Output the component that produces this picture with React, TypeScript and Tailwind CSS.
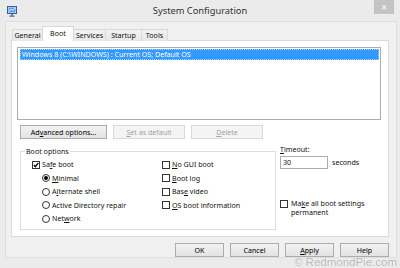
import React from "react";

function AppIcon() {
  return (
    <svg width="10" height="11" viewBox="0 0 10 11">
      <rect x="0.5" y="0.5" width="9" height="7" fill="#dfe8f5" stroke="#3a5ca8" />
      <rect x="1.5" y="1.5" width="7" height="5" fill="#5fa0e4" />
      <path d="M2 5.5 L4 3 L6 4.5 L8 2" stroke="#e8f4ff" strokeWidth="0.8" fill="none" />
      <rect x="4" y="8" width="2" height="1.5" fill="#6b7a90" />
      <rect x="2.5" y="9.5" width="5" height="1.2" fill="#3a5ca8" />
    </svg>
  );
}

function Check({ checked }: { checked?: boolean }) {
  return (
    <span className="flex h-[8px] w-[8px] shrink-0 items-center justify-center border border-[#333333] bg-white">
      {checked && (
        <svg width="6" height="6" viewBox="0 0 6 6">
          <path d="M0.8 3 L2.4 4.7 L5.3 0.9" stroke="#000" strokeWidth="1.3" fill="none" />
        </svg>
      )}
    </span>
  );
}

function Radio({ checked }: { checked?: boolean }) {
  return (
    <span className="flex h-[8px] w-[8px] shrink-0 items-center justify-center rounded-full border border-[#333333] bg-white">
      {checked && <span className="h-[4px] w-[4px] rounded-full bg-black" />}
    </span>
  );
}

function Btn({ children, w, disabled }: { children: React.ReactNode; w: string; disabled?: boolean }) {
  return (
    <div
      className={
        disabled
          ? `flex h-[14px] items-center justify-center border border-[#d9d9d9] bg-[#f4f4f4] text-[#a3a3a3] ${w}`
          : `flex h-[14px] items-center justify-center border border-[#acacac] bg-linear-to-b from-[#f2f2f2] to-[#e3e3e3] text-black ${w}`
      }
    >
      {children}
    </div>
  );
}

function Row({ children, indent }: { children: React.ReactNode; indent?: boolean }) {
  return (
    <div className={indent ? "flex h-[13.5px] items-center gap-[2px] pl-[10px]" : "flex h-[13.5px] items-center gap-[2px]"}>
      {children}
    </div>
  );
}

export default function App() {
  return (
    <div className="relative h-[268px] w-[400px] overflow-hidden bg-[#ebebeb] font-['Noto_Sans','Liberation_Sans',sans-serif] text-[7.1px] leading-[9px] text-[#111111]">
      {/* title bar */}
      <div className="grid h-[21px] grid-cols-[1fr_auto_1fr]">
        <div className="pl-[7px] pt-[6px]">
          <AppIcon />
        </div>
        <div className="pt-[4px] text-[9.3px] leading-[13px] text-[#333333]">System Configuration</div>
        <div className="flex justify-end pr-[6px]">
          <div className="flex h-[14px] w-[20px] items-center justify-center bg-[#c4c4c4] text-[10px] leading-none text-white">
            ×
          </div>
        </div>
      </div>

      {/* client area */}
      <div className="ml-[5px] h-[237px] w-[392px] border border-[#dedede] bg-[#f0f0f0] pl-[5px] pt-[4px]">
        {/* tabs */}
        <div className="relative z-10 ml-[1px] flex h-[15px] items-end">
          <div className="flex h-[12px] w-[31px] items-center justify-center border border-b-0 border-[#d9d9d9] bg-linear-to-b from-[#f3f3f3] to-[#e8e8e8]">
            General
          </div>
          <div className="-ml-px flex h-[15px] w-[32px] items-center justify-center border border-b-0 border-[#d9d9d9] bg-white pb-[1px]">
            Boot
          </div>
          <div className="-ml-px flex h-[12px] w-[33px] items-center justify-center border border-b-0 border-[#d9d9d9] bg-linear-to-b from-[#f3f3f3] to-[#e8e8e8]">
            Services
          </div>
          <div className="-ml-px flex h-[12px] w-[37px] items-center justify-center border border-b-0 border-[#d9d9d9] bg-linear-to-b from-[#f3f3f3] to-[#e8e8e8]">
            Startup
          </div>
          <div className="-ml-px flex h-[12px] w-[27px] items-center justify-center border border-b-0 border-[#d9d9d9] bg-linear-to-b from-[#f3f3f3] to-[#e8e8e8]">
            Tools
          </div>
        </div>

        {/* tab page */}
        <div className="-mt-px h-[197px] w-[378px] border border-[#d9d9d9] bg-white">
          {/* OS list */}
          <div className="ml-[5px] mt-[6px] h-[73px] w-[364px] border border-[#abadb3] bg-white pl-[2px] pr-[1px] pt-[1px]">
            <div className="h-[11px] border border-dotted border-[#a8d2ff] bg-[#3399ff] pl-[1px] leading-[9px] text-white">
              Windows 8 (C:\WINDOWS) : Current OS; Default OS
            </div>
          </div>

          <div className="ml-[8px] mt-[5px] flex gap-[6px]">
            <Btn w="w-[87px]">
              Ad<u>v</u>anced options...
            </Btn>
            <Btn w="w-[72px]" disabled>
              <u>S</u>et as default
            </Btn>
            <Btn w="w-[72px]" disabled>
              <u>D</u>elete
            </Btn>
          </div>

          <div className="ml-[8px] mt-[8px] flex">
            <fieldset className="h-[83px] w-[256px] border border-[#dcdcdc]">
              <legend className="ml-[4px] px-[1px] leading-[9px]">Boot options</legend>
              <div className="flex pt-[2px]">
                <div className="w-[141px] pl-[11px]">
                  <Row>
                    <Check checked />
                    <span>
                      Sa<u>f</u>e boot
                    </span>
                  </Row>
                  <Row indent>
                    <Radio checked />
                    <span>
                      <u>M</u>inimal
                    </span>
                  </Row>
                  <Row indent>
                    <Radio />
                    <span>
                      A<u>l</u>ternate shell
                    </span>
                  </Row>
                  <Row indent>
                    <Radio />
                    <span>Active Directory repair</span>
                  </Row>
                  <Row indent>
                    <Radio />
                    <span>
                      Net<u>w</u>ork
                    </span>
                  </Row>
                </div>
                <div>
                  <Row>
                    <Check />
                    <span>
                      <u>N</u>o GUI boot
                    </span>
                  </Row>
                  <Row>
                    <Check />
                    <span>
                      <u>B</u>oot log
                    </span>
                  </Row>
                  <Row>
                    <Check />
                    <span>
                      Bas<u>e</u> video
                    </span>
                  </Row>
                  <Row>
                    <Check />
                    <span>
                      <u>O</u>S boot information
                    </span>
                  </Row>
                </div>
              </div>
            </fieldset>

            <div className="-mt-[2px] ml-[4px] flex flex-col">
              <div>
                <u>T</u>imeout:
              </div>
              <div className="mt-[2px] flex items-center">
                <div className="flex h-[13px] w-[48px] items-center border border-[#abadb3] bg-white pl-[2px]">30</div>
                <span className="ml-[4px]">seconds</span>
              </div>
              <div className="mt-[30px] flex items-start">
                <span className="mt-[1px]">
                  <Check />
                </span>
                <span className="ml-[3px] leading-[8.7px]">
                  Ma<u>k</u>e all boot settings
                  <br />
                  permanent
                </span>
              </div>
            </div>
          </div>
        </div>

        {/* dialog buttons */}
        <div className="mt-[6px] flex w-[378px] justify-end gap-[6px]">
          <Btn w="w-[49px]">OK</Btn>
          <Btn w="w-[49px]">Cancel</Btn>
          <Btn w="w-[49px]">
            <u>A</u>pply
          </Btn>
          <Btn w="w-[49px]">Help</Btn>
        </div>
      </div>

      {/* watermark */}
      <div className="absolute bottom-[-1px] right-[3px] font-['Liberation_Sans',sans-serif] text-[11.5px] leading-[14px] text-[#b5b5b5] [text-shadow:0_0_1px_#fff,0_0_1px_#fff]">
        © RedmondPie.com
      </div>
    </div>
  );
}
